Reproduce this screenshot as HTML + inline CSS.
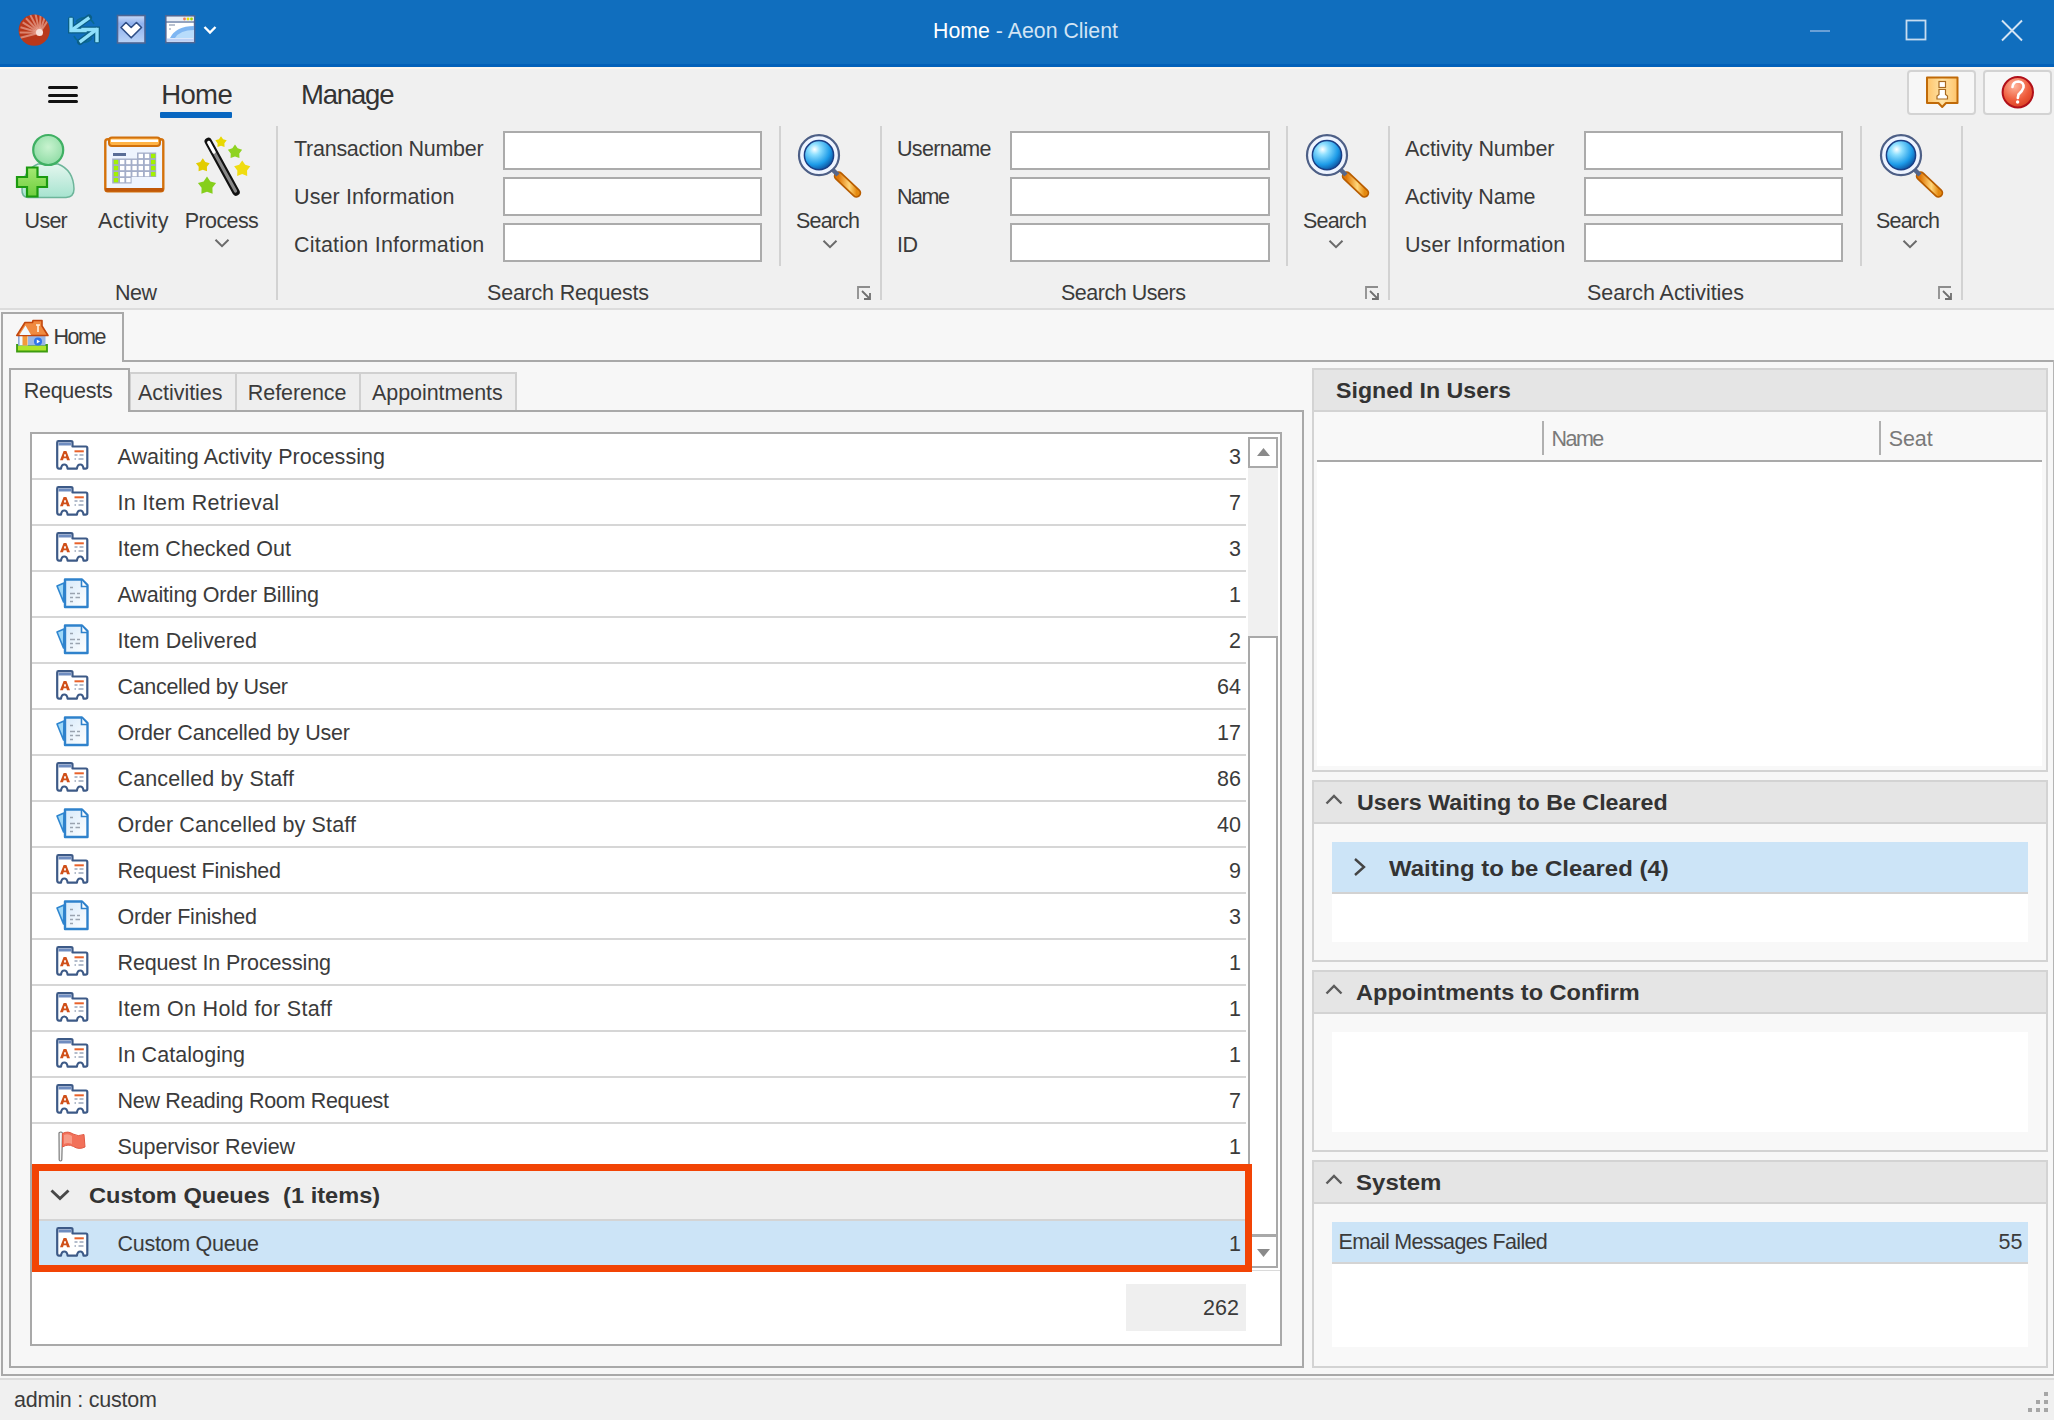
<!DOCTYPE html>
<html><head><meta charset="utf-8"><style>
html,body{margin:0;padding:0;}
body{width:2054px;height:1420px;overflow:hidden;position:relative;background:#f7f7f7;font-family:"Liberation Sans",sans-serif;}
.t{position:absolute;white-space:pre;}
svg{overflow:visible}
</style></head><body>
<div style="position:absolute;left:0px;top:0px;width:2054px;height:66px;background:#106ebe"></div>
<div style="position:absolute;left:0px;top:64px;width:2054px;height:3px;background:#0361b9"></div>
<div style="position:absolute;left:0px;top:67px;width:2054px;height:2px;background:#fbf6f0"></div>
<div style="position:absolute;left:0px;top:69px;width:2054px;height:240px;background:#f0f0f0"></div>
<div style="position:absolute;left:0px;top:308px;width:2054px;height:2px;background:#dcdcdc"></div>
<div style="position:absolute;left:48px;top:86px;width:30px;height:3px;background:#111;border-radius:1.5px"></div>
<div style="position:absolute;left:48px;top:93.5px;width:30px;height:3.0px;background:#111;border-radius:1.5px"></div>
<div style="position:absolute;left:48px;top:100px;width:30px;height:3px;background:#111;border-radius:1.5px"></div>
<div style="position:absolute;left:160px;top:112px;width:72px;height:6px;background:#0766c0;border-radius:1px"></div>
<div style="position:absolute;left:1907px;top:70px;width:69px;height:45px;background:#f7f7f7;border:2px solid #d3d3d3;border-radius:4px;box-sizing:border-box"></div>
<div style="position:absolute;left:1983px;top:70px;width:69px;height:45px;background:#f7f7f7;border:2px solid #d3d3d3;border-radius:4px;box-sizing:border-box"></div>
<div style="position:absolute;left:276px;top:126px;width:2px;height:174px;background:#d2d2d2"></div>
<div style="position:absolute;left:778.5px;top:126px;width:2.0px;height:140px;background:#d2d2d2"></div>
<div style="position:absolute;left:880px;top:126px;width:2px;height:174px;background:#d2d2d2"></div>
<div style="position:absolute;left:1286px;top:126px;width:2px;height:140px;background:#d2d2d2"></div>
<div style="position:absolute;left:1388px;top:126px;width:2px;height:174px;background:#d2d2d2"></div>
<div style="position:absolute;left:1860px;top:126px;width:2px;height:140px;background:#d2d2d2"></div>
<div style="position:absolute;left:1961px;top:126px;width:2px;height:174px;background:#d2d2d2"></div>
<div style="position:absolute;left:502.5px;top:131px;width:259.5px;height:38.5px;background:#fff;border:2px solid #ababab;box-sizing:border-box"></div>
<div style="position:absolute;left:502.5px;top:177px;width:259.5px;height:39px;background:#fff;border:2px solid #ababab;box-sizing:border-box"></div>
<div style="position:absolute;left:502.5px;top:223px;width:259.5px;height:39px;background:#fff;border:2px solid #ababab;box-sizing:border-box"></div>
<div style="position:absolute;left:1010px;top:131px;width:260px;height:38.5px;background:#fff;border:2px solid #ababab;box-sizing:border-box"></div>
<div style="position:absolute;left:1010px;top:177px;width:260px;height:39px;background:#fff;border:2px solid #ababab;box-sizing:border-box"></div>
<div style="position:absolute;left:1010px;top:223px;width:260px;height:39px;background:#fff;border:2px solid #ababab;box-sizing:border-box"></div>
<div style="position:absolute;left:1584px;top:131px;width:259px;height:38.5px;background:#fff;border:2px solid #ababab;box-sizing:border-box"></div>
<div style="position:absolute;left:1584px;top:177px;width:259px;height:39px;background:#fff;border:2px solid #ababab;box-sizing:border-box"></div>
<div style="position:absolute;left:1584px;top:223px;width:259px;height:39px;background:#fff;border:2px solid #ababab;box-sizing:border-box"></div>
<div style="position:absolute;left:1px;top:312px;width:123px;height:50px;background:#f7f7f7;border:2px solid #a9a9a9;border-bottom:none;box-sizing:border-box"></div>
<div style="position:absolute;left:123px;top:360px;width:1931px;height:2px;background:#a9a9a9"></div>
<div style="position:absolute;left:1px;top:360px;width:2px;height:1016px;background:#a9a9a9"></div>
<div style="position:absolute;left:1px;top:1374px;width:2053px;height:2px;background:#a9a9a9"></div>
<div style="position:absolute;left:2053px;top:360px;width:1px;height:1016px;background:#b4b4b4"></div>
<div style="position:absolute;left:129px;top:372px;width:108px;height:40px;background:#eeeeee;border:2px solid #d0d0d0;border-bottom:none;box-sizing:border-box"></div>
<div style="position:absolute;left:235px;top:372px;width:126px;height:40px;background:#eeeeee;border:2px solid #d0d0d0;border-bottom:none;box-sizing:border-box"></div>
<div style="position:absolute;left:359px;top:372px;width:158px;height:40px;background:#eeeeee;border:2px solid #d0d0d0;border-bottom:none;box-sizing:border-box"></div>
<div style="position:absolute;left:9px;top:410px;width:1294.5px;height:958px;background:#f7f7f7;border:2px solid #a9a9a9;box-sizing:border-box"></div>
<div style="position:absolute;left:9px;top:368px;width:121px;height:44px;background:#f7f7f7;border:2px solid #a9a9a9;border-bottom:none;box-sizing:border-box"></div>
<div style="position:absolute;left:30px;top:432px;width:1252px;height:913.5px;background:#fff;border:2px solid #a9a9a9;box-sizing:border-box"></div>
<div style="position:absolute;left:32px;top:478px;width:1214px;height:2px;background:#d6d6d6"></div>
<div style="position:absolute;left:32px;top:524px;width:1214px;height:2px;background:#d6d6d6"></div>
<div style="position:absolute;left:32px;top:570px;width:1214px;height:2px;background:#d6d6d6"></div>
<div style="position:absolute;left:32px;top:616px;width:1214px;height:2px;background:#d6d6d6"></div>
<div style="position:absolute;left:32px;top:662px;width:1214px;height:2px;background:#d6d6d6"></div>
<div style="position:absolute;left:32px;top:708px;width:1214px;height:2px;background:#d6d6d6"></div>
<div style="position:absolute;left:32px;top:754px;width:1214px;height:2px;background:#d6d6d6"></div>
<div style="position:absolute;left:32px;top:800px;width:1214px;height:2px;background:#d6d6d6"></div>
<div style="position:absolute;left:32px;top:846px;width:1214px;height:2px;background:#d6d6d6"></div>
<div style="position:absolute;left:32px;top:892px;width:1214px;height:2px;background:#d6d6d6"></div>
<div style="position:absolute;left:32px;top:938px;width:1214px;height:2px;background:#d6d6d6"></div>
<div style="position:absolute;left:32px;top:984px;width:1214px;height:2px;background:#d6d6d6"></div>
<div style="position:absolute;left:32px;top:1030px;width:1214px;height:2px;background:#d6d6d6"></div>
<div style="position:absolute;left:32px;top:1076px;width:1214px;height:2px;background:#d6d6d6"></div>
<div style="position:absolute;left:32px;top:1122px;width:1214px;height:2px;background:#d6d6d6"></div>
<div style="position:absolute;left:38px;top:1170px;width:1208px;height:51px;background:#efefef"></div>
<div style="position:absolute;left:38px;top:1219px;width:1208px;height:2px;background:#d4d4d4"></div>
<div style="position:absolute;left:38px;top:1221px;width:1208px;height:45px;background:#cce4f7"></div>
<svg style="position:absolute;left:48px;top:1186px" width="24" height="18" viewBox="0 0 24 18"><path d="M3.5 4.5 L12 12.5 L20.5 4.5" fill="none" stroke="#484848" stroke-width="2.9"/></svg>
<div style="position:absolute;left:1248px;top:467px;width:30px;height:170px;background:#f0f0f0"></div>
<div style="position:absolute;left:1248px;top:437px;width:30px;height:31px;background:#fff;border:2px solid #a9a9a9;box-sizing:border-box"></div>
<div style="position:absolute;left:1248px;top:636px;width:30px;height:600px;background:#fff;border:2px solid #a9a9a9;box-sizing:border-box"></div>
<div style="position:absolute;left:1248px;top:1235px;width:30px;height:33px;background:#fff;border:2px solid #a9a9a9;box-sizing:border-box"></div>
<svg style="position:absolute;left:1256.5px;top:448px" width="13" height="8" viewBox="0 0 13 8"><path d="M0 8 L6.5 0 L13 8 Z" fill="#8a8a8a"/></svg>
<svg style="position:absolute;left:1256.5px;top:1249px" width="13" height="8" viewBox="0 0 13 8"><path d="M0 0 L6.5 8 L13 0 Z" fill="#8a8a8a"/></svg>
<div style="position:absolute;left:1252px;top:1269.5px;width:28px;height:1.5px;background:#dadada"></div>
<div style="position:absolute;left:31.5px;top:1163.5px;width:1220.5px;height:108.5px;border:7px solid #f24405;box-sizing:border-box"></div>
<div style="position:absolute;left:1126px;top:1284px;width:120px;height:47px;background:#efefef"></div>
<div style="position:absolute;left:1312px;top:368px;width:735.5px;height:404px;background:#f8f8f8;border:2px solid #d3d3d3;box-sizing:border-box"></div>
<div style="position:absolute;left:1312px;top:368px;width:735.5px;height:43.5px;background:#e5e5e5;border:2px solid #d3d3d3;box-sizing:border-box"></div>
<div style="position:absolute;left:1317px;top:462px;width:725px;height:304px;background:#fff"></div>
<div style="position:absolute;left:1317px;top:460px;width:725px;height:2px;background:#a9a9a9"></div>
<div style="position:absolute;left:1542px;top:421px;width:2px;height:34px;background:#b0b0b0"></div>
<div style="position:absolute;left:1879px;top:421px;width:2px;height:34px;background:#b0b0b0"></div>
<div style="position:absolute;left:1312px;top:780px;width:735.5px;height:181.5px;background:#f8f8f8;border:2px solid #d3d3d3;box-sizing:border-box"></div>
<div style="position:absolute;left:1312px;top:780px;width:735.5px;height:43.5px;background:#e5e5e5;border:2px solid #d3d3d3;box-sizing:border-box"></div>
<svg style="position:absolute;left:1325px;top:793px" width="18" height="12" viewBox="0 0 18 12"><path d="M1.5 10.5 L9 3 L16.5 10.5" fill="none" stroke="#5c5c5c" stroke-width="2.4"/></svg>
<div style="position:absolute;left:1332px;top:841.5px;width:696px;height:100.10000000000002px;background:#fff"></div>
<div style="position:absolute;left:1332px;top:841.5px;width:696px;height:50.5px;background:#cce4f7"></div>
<div style="position:absolute;left:1332px;top:892px;width:696px;height:2px;background:#d2d2d2"></div>
<svg style="position:absolute;left:1352px;top:856.5px" width="16" height="20" viewBox="0 0 16 20"><path d="M3 2 L12 10 L3 18" fill="none" stroke="#444" stroke-width="2.4"/></svg>
<div style="position:absolute;left:1312px;top:970px;width:735.5px;height:181.5px;background:#f8f8f8;border:2px solid #d3d3d3;box-sizing:border-box"></div>
<div style="position:absolute;left:1312px;top:970px;width:735.5px;height:43.5px;background:#e5e5e5;border:2px solid #d3d3d3;box-sizing:border-box"></div>
<svg style="position:absolute;left:1325px;top:983px" width="18" height="12" viewBox="0 0 18 12"><path d="M1.5 10.5 L9 3 L16.5 10.5" fill="none" stroke="#5c5c5c" stroke-width="2.4"/></svg>
<div style="position:absolute;left:1332px;top:1031.5px;width:696px;height:100.09999999999991px;background:#fff"></div>
<div style="position:absolute;left:1312px;top:1160px;width:735.5px;height:208px;background:#f8f8f8;border:2px solid #d3d3d3;box-sizing:border-box"></div>
<div style="position:absolute;left:1312px;top:1160px;width:735.5px;height:43.5px;background:#e5e5e5;border:2px solid #d3d3d3;box-sizing:border-box"></div>
<svg style="position:absolute;left:1325px;top:1173px" width="18" height="12" viewBox="0 0 18 12"><path d="M1.5 10.5 L9 3 L16.5 10.5" fill="none" stroke="#5c5c5c" stroke-width="2.4"/></svg>
<div style="position:absolute;left:1332px;top:1221.5px;width:696px;height:125.5px;background:#fff"></div>
<div style="position:absolute;left:1332px;top:1221.5px;width:696px;height:40.5px;background:#cce4f7"></div>
<div style="position:absolute;left:1332px;top:1262px;width:696px;height:2px;background:#d4d4d4"></div>
<div style="position:absolute;left:0px;top:1376px;width:2054px;height:2px;background:#f7f7f7"></div>
<div style="position:absolute;left:0px;top:1378px;width:2054px;height:2px;background:#dcdcdc"></div>
<div style="position:absolute;left:0px;top:1380px;width:2054px;height:40px;background:#f0f0f0"></div>
<div style="position:absolute;left:2043.7px;top:1391.7px;width:4.0px;height:4.0px;background:#a6a6a6"></div>
<div style="position:absolute;left:2035.7px;top:1399.8px;width:4.0px;height:4.0px;background:#a6a6a6"></div>
<div style="position:absolute;left:2043.7px;top:1399.8px;width:4.0px;height:4.0px;background:#a6a6a6"></div>
<div style="position:absolute;left:2027.7px;top:1407.6px;width:4.0px;height:4.0px;background:#a6a6a6"></div>
<div style="position:absolute;left:2035.7px;top:1407.6px;width:4.0px;height:4.0px;background:#a6a6a6"></div>
<div style="position:absolute;left:2043.7px;top:1407.6px;width:4.0px;height:4.0px;background:#a6a6a6"></div>
<svg width="0" height="0" style="position:absolute"><defs>
<radialGradient id="gRed" cx="0.6" cy="0.6" r="0.6"><stop offset="0" stop-color="#f3d6cf"/><stop offset="0.35" stop-color="#cf5a3c"/><stop offset="1" stop-color="#b3341a"/></radialGradient>
<linearGradient id="gChk" x1="0" y1="0" x2="0" y2="1"><stop offset="0" stop-color="#c9dbf8"/><stop offset="0.3" stop-color="#8fb1ee"/><stop offset="1" stop-color="#b9d3f6"/></linearGradient>
<radialGradient id="gGlass" cx="0.35" cy="0.3" r="0.75"><stop offset="0" stop-color="#ffffff"/><stop offset="0.25" stop-color="#8fe0ff"/><stop offset="0.7" stop-color="#1d9be8"/><stop offset="1" stop-color="#0d4f9c"/></radialGradient>
<linearGradient id="gHandle" x1="0" y1="0" x2="1" y2="0"><stop offset="0" stop-color="#e07808"/><stop offset="0.6" stop-color="#ffd67a"/><stop offset="1" stop-color="#e58a10"/></linearGradient>
<radialGradient id="gHead" cx="0.5" cy="0.4" r="0.6"><stop offset="0" stop-color="#c8f3cf"/><stop offset="1" stop-color="#8fdca5"/></radialGradient>
<linearGradient id="gBody" x1="0" y1="0" x2="0" y2="1"><stop offset="0" stop-color="#e4f6ee"/><stop offset="1" stop-color="#a6e3cf"/></linearGradient>
<linearGradient id="gPlus" x1="0" y1="0" x2="0" y2="1"><stop offset="0" stop-color="#a4e873"/><stop offset="1" stop-color="#6fce3e"/></linearGradient>
<radialGradient id="gHelp" cx="0.4" cy="0.3" r="0.8"><stop offset="0" stop-color="#ffb49a"/><stop offset="0.6" stop-color="#ee5a3a"/><stop offset="1" stop-color="#d23a1e"/></radialGradient>
<linearGradient id="gInfo" x1="0" y1="0" x2="1" y2="0"><stop offset="0" stop-color="#ffc46a"/><stop offset="0.5" stop-color="#ffe3a6"/><stop offset="1" stop-color="#ffc46a"/></linearGradient>
<linearGradient id="gDoc" x1="0" y1="0" x2="1" y2="1"><stop offset="0" stop-color="#d7eafa"/><stop offset="1" stop-color="#ffffff"/></linearGradient>
</defs></svg>
<svg style="position:absolute;left:16px;top:12px" width="36" height="36" viewBox="16 12 36 36"><clipPath id="cAeon"><circle cx="34.2" cy="30.2" r="15.6"/></clipPath><circle cx="34.2" cy="30.2" r="15.6" fill="#b9381c"/><g clip-path="url(#cAeon)"><line x1="39.7" y1="32.8" x2="20.32834892003052" y2="37.77384503537425" stroke="#f2b8a8" stroke-width="2" opacity="0.6"/><line x1="39.7" y1="32.8" x2="19.702466512654286" y2="32.485906984339465" stroke="#f2b8a8" stroke-width="2" opacity="0.6"/><line x1="39.7" y1="32.8" x2="20.494110147392142" y2="27.220233430555147" stroke="#f2b8a8" stroke-width="2" opacity="0.6"/><line x1="39.7" y1="32.8" x2="22.64716413032488" y2="22.350081875826895" stroke="#f2b8a8" stroke-width="2" opacity="0.6"/><line x1="39.7" y1="32.8" x2="26.00900913503328" y2="18.220673227635036" stroke="#f2b8a8" stroke-width="2" opacity="0.6"/><line x1="39.7" y1="32.8" x2="30.341340630273997" y2="15.124720799901354" stroke="#f2b8a8" stroke-width="2" opacity="0.6"/><line x1="39.7" y1="32.8" x2="35.33706110717368" y2="13.281681316838188" stroke="#f2b8a8" stroke-width="2" opacity="0.6"/><line x1="39.7" y1="32.8" x2="40.642048699672756" y2="12.822198713385774" stroke="#f2b8a8" stroke-width="2" opacity="0.6"/><line x1="39.7" y1="32.8" x2="45.88025912859959" y2="13.77884343412942" stroke="#f2b8a8" stroke-width="2" opacity="0.6"/><line x1="39.7" y1="32.8" x2="50.680381616963814" y2="16.083803675900327" stroke="#f2b8a8" stroke-width="2" opacity="0.6"/><circle cx="39.5" cy="32.5" r="3.5" fill="#f7e0da"/></g></svg>
<svg style="position:absolute;left:66px;top:13px" width="36" height="33" viewBox="66 13 36 33"><g fill="none" stroke="#0a6a8c" stroke-width="1.6" opacity="0.9"><path d="M76 22 A10.5 10.5 0 0 1 94 24"/><path d="M92 38 A10.5 10.5 0 0 1 74 36"/></g><g fill="none" stroke="#0b5f86" stroke-width="6" stroke-linecap="round" stroke-linejoin="miter"><path d="M71 19.5 V30.5 H85"/><path d="M72 30 L89 17.5"/><path d="M97 40.5 V29.5 H83"/><path d="M96 30 L80 42"/></g><g fill="none" stroke="#8fe0fb" stroke-width="3.4" stroke-linecap="square" stroke-linejoin="miter"><path d="M71 19.5 V30.5 H85"/><path d="M72 30 L88 18.5"/><path d="M97 40.5 V29.5 H83"/><path d="M96 30 L81 41"/></g></svg>
<svg style="position:absolute;left:115px;top:13px" width="33" height="33" viewBox="115 13 33 33"><rect x="117.5" y="15.5" width="27.5" height="27.5" fill="url(#gChk)" stroke="#4e6694" stroke-width="1.6"/><path d="M121 27.5 L126 22.5 L131.2 27.5 L136.5 22.5 L141.5 27.5 L131.2 37.8 Z" fill="#fff" stroke="#2f4e86" stroke-width="1.6" stroke-linejoin="round"/></svg>
<svg style="position:absolute;left:163px;top:13px" width="35" height="33" viewBox="163 13 35 33"><rect x="165.8" y="15.8" width="28.8" height="26.8" fill="#fff" stroke="#4e6694" stroke-width="1.6"/><rect x="167" y="17" width="26.5" height="4" fill="#e6ecf5"/><circle cx="184.5" cy="19" r="1.4" fill="#f07b5a"/><circle cx="188" cy="19" r="1.4" fill="#e9e400"/><circle cx="191.5" cy="19" r="1.4" fill="#a7d400"/><line x1="166" y1="22" x2="195" y2="22" stroke="#4e6694" stroke-width="1.2"/><path d="M170 38 Q176 26 194 26 L194 38 Z" fill="#7fb6f2"/><path d="M175 38 Q180 30 194 30 L194 38 Z" fill="#b8dcfb"/><rect x="167" y="38.5" width="27" height="3.2" fill="#bcd0f5"/><line x1="169" y1="25" x2="175" y2="25" stroke="#8a98b0" stroke-width="1.2"/><line x1="169" y1="29" x2="171" y2="29" stroke="#8a98b0" stroke-width="1.2"/></svg>
<svg style="position:absolute;left:200px;top:22px" width="20" height="16" viewBox="200 22 20 16"><path d="M204.5 27 L210 32.5 L215.5 27" fill="none" stroke="#fff" stroke-width="2.4"/></svg>
<div style="position:absolute;left:1810px;top:30px;width:20px;height:2px;background:#6aa0d6"></div>
<svg style="position:absolute;left:1900px;top:14px" width="32" height="32" viewBox="1900 14 32 32"><rect x="1906.5" y="20.5" width="19" height="19" fill="none" stroke="#c7dcf0" stroke-width="1.8"/></svg>
<svg style="position:absolute;left:1996px;top:14px" width="32" height="32" viewBox="1996 14 32 32"><path d="M2002 20.5 L2022 40.5 M2022 20.5 L2002 40.5" stroke="#d2e3f3" stroke-width="1.9"/></svg>
<svg style="position:absolute;left:1920px;top:72px" width="46" height="40" viewBox="1920 72 46 40"><path d="M1927 77.5 H1957.5 V103 H1946 L1942.2 107 L1938.4 103 H1927 Z" fill="url(#gInfo)" stroke="#c06a08" stroke-width="2" stroke-linejoin="round"/><rect x="1939" y="81.5" width="6.5" height="6" fill="#fff" stroke="#a86a20" stroke-width="1.2"/><path d="M1939 89.5 H1945.5 V94.5 L1947.5 96 V99 H1937 V96 L1939 94.5 Z" fill="#fff" stroke="#a86a20" stroke-width="1.2"/></svg>
<svg style="position:absolute;left:1998px;top:70px" width="42" height="44" viewBox="1998 70 42 44"><circle cx="2017.8" cy="92.2" r="15.2" fill="url(#gHelp)" stroke="#b1101a" stroke-width="2"/><path d="M2012.5 87 Q2013 81.5 2018.5 81.5 Q2024 82 2023.5 87.5 Q2022.5 91 2018.5 94.5 L2017.8 98" fill="none" stroke="#fff" stroke-width="2.6" stroke-linecap="round"/><circle cx="2017.6" cy="102" r="1.7" fill="#fff"/></svg>
<svg style="position:absolute;left:12px;top:130px" width="68" height="72" viewBox="12 130 68 72"><path d="M28 197.5 Q21.5 197 22 189 Q23.5 170 38 164 L58 164 Q73.5 170 74 189 Q74 197 66 197.5 Z" fill="url(#gBody)" stroke="#6db59a" stroke-width="1.5"/><circle cx="48.2" cy="150" r="15" fill="url(#gHead)" stroke="#3fb063" stroke-width="2.2"/><path d="M27 167.5 H37.5 V177 H47 V187 H37.5 V196.5 H27 V187 H17 V177 H27 Z" fill="url(#gPlus)" stroke="#1c9a10" stroke-width="2.2" stroke-linejoin="miter"/></svg>
<svg style="position:absolute;left:100px;top:132px" width="70" height="64" viewBox="100 132 70 64"><rect x="105.3" y="139.2" width="58" height="52" rx="2.5" fill="#eef4fe" stroke="#d4720c" stroke-width="2.4"/><rect x="109" y="137.5" width="51" height="8.5" rx="3" fill="#ffb347" stroke="#d0700c" stroke-width="2"/><rect x="111" y="139.5" width="47" height="2.5" fill="#fff"/><path d="M112.2 158.5 H137 V152.5 H156.2 V177 H131.6 V183.5 H112.2 Z" fill="#a3adc8"/><rect x="138.6" y="153.8" width="4.4" height="4.3" fill="#ffffff"/><rect x="144.8" y="153.8" width="4.4" height="4.3" fill="#ffffff"/><rect x="151.0" y="153.8" width="4.4" height="4.3" fill="#a2f200"/><rect x="113.8" y="159.9" width="4.4" height="4.3" fill="#a2f200"/><rect x="120.0" y="159.9" width="4.4" height="4.3" fill="#ffffff"/><rect x="126.2" y="159.9" width="4.4" height="4.3" fill="#ffffff"/><rect x="132.4" y="159.9" width="4.4" height="4.3" fill="#ffffff"/><rect x="138.6" y="159.9" width="4.4" height="4.3" fill="#ffffff"/><rect x="144.8" y="159.9" width="4.4" height="4.3" fill="#ffffff"/><rect x="151.0" y="159.9" width="4.4" height="4.3" fill="#a2f200"/><rect x="113.8" y="165.9" width="4.4" height="4.3" fill="#a2f200"/><rect x="120.0" y="165.9" width="4.4" height="4.3" fill="#ffffff"/><rect x="126.2" y="165.9" width="4.4" height="4.3" fill="#ffffff"/><rect x="132.4" y="165.9" width="4.4" height="4.3" fill="#ffffff"/><rect x="138.6" y="165.9" width="4.4" height="4.3" fill="#ffffff"/><rect x="144.8" y="165.9" width="4.4" height="4.3" fill="#ffffff"/><rect x="151.0" y="165.9" width="4.4" height="4.3" fill="#a2f200"/><rect x="113.8" y="172.0" width="4.4" height="4.3" fill="#a2f200"/><rect x="120.0" y="172.0" width="4.4" height="4.3" fill="#ffffff"/><rect x="126.2" y="172.0" width="4.4" height="4.3" fill="#ffffff"/><rect x="132.4" y="172.0" width="4.4" height="4.3" fill="#ffffff"/><rect x="138.6" y="172.0" width="4.4" height="4.3" fill="#ffffff"/><rect x="144.8" y="172.0" width="4.4" height="4.3" fill="#ffffff"/><rect x="151.0" y="172.0" width="4.4" height="4.3" fill="#a2f200"/><rect x="113.8" y="178.0" width="4.4" height="4.3" fill="#a2f200"/><rect x="120.0" y="178.0" width="4.4" height="4.3" fill="#ffffff"/><rect x="126.2" y="178.0" width="4.4" height="4.3" fill="#ffffff"/><rect x="113" y="153" width="13" height="3" fill="#5a6d96"/><rect x="105.3" y="188" width="58" height="3.6" fill="#c0580a"/></svg>
<svg style="position:absolute;left:190px;top:132px" width="68" height="70" viewBox="190 132 68 70"><line x1="208.3" y1="141.5" x2="236" y2="192" stroke="#111" stroke-width="7.5" stroke-linecap="round"/><line x1="208.8" y1="142.5" x2="235.5" y2="191" stroke="#888" stroke-width="3.2" stroke-linecap="round"/><line x1="208.8" y1="142.5" x2="214" y2="152" stroke="#fff" stroke-width="3.2" stroke-linecap="round"/><polygon points="221.00,136.20 223.12,139.29 226.71,140.35 224.42,143.31 224.53,147.05 221.00,145.80 217.47,147.05 217.58,143.31 215.29,140.35 218.88,139.29" fill="#e8d800" stroke-linejoin="round"/><polygon points="235.00,144.50 237.65,148.36 242.13,149.68 239.28,153.39 239.41,158.07 235.00,156.50 230.59,158.07 230.72,153.39 227.87,149.68 232.35,148.36" fill="#8fd320" stroke-linejoin="round"/><polygon points="202.80,158.30 205.34,162.01 209.65,163.28 206.91,166.83 207.03,171.32 202.80,169.82 198.57,171.32 198.69,166.83 195.95,163.28 200.26,162.01" fill="#e2cc00" stroke-linejoin="round"/><polygon points="242.20,160.50 245.20,164.87 250.28,166.37 247.05,170.58 247.20,175.88 242.20,174.10 237.20,175.88 237.35,170.58 234.12,166.37 239.20,164.87" fill="#f0dc10" stroke-linejoin="round"/><polygon points="207.00,176.50 210.35,181.39 216.04,183.06 212.42,187.76 212.58,193.69 207.00,191.70 201.42,193.69 201.58,187.76 197.96,183.06 203.65,181.39" fill="#86cf1c" stroke-linejoin="round"/></svg>
<svg style="position:absolute;left:790px;top:128px" width="76" height="74" viewBox="790 128 76 74"><line x1="838.5" y1="176" x2="856.5" y2="193" stroke="#b85d00" stroke-width="9.5" stroke-linecap="round"/><line x1="838.5" y1="176" x2="856.5" y2="193" stroke="url(#gHandle)" stroke-width="6" stroke-linecap="round"/><line x1="831" y1="168" x2="838" y2="175" stroke="#55678c" stroke-width="4.5"/><circle cx="819" cy="155.2" r="20" fill="#eef4ff" stroke="#4d5f86" stroke-width="2.2"/><circle cx="819" cy="155.2" r="14.6" fill="url(#gGlass)" stroke="#1a3f86" stroke-width="1.5"/></svg>
<svg style="position:absolute;left:1297.5px;top:128px" width="76.0" height="74" viewBox="1297.5 128 76.0 74"><line x1="1346.0" y1="176" x2="1364.0" y2="193" stroke="#b85d00" stroke-width="9.5" stroke-linecap="round"/><line x1="1346.0" y1="176" x2="1364.0" y2="193" stroke="url(#gHandle)" stroke-width="6" stroke-linecap="round"/><line x1="1338.5" y1="168" x2="1345.5" y2="175" stroke="#55678c" stroke-width="4.5"/><circle cx="1326.5" cy="155.2" r="20" fill="#eef4ff" stroke="#4d5f86" stroke-width="2.2"/><circle cx="1326.5" cy="155.2" r="14.6" fill="url(#gGlass)" stroke="#1a3f86" stroke-width="1.5"/></svg>
<svg style="position:absolute;left:1872px;top:128px" width="76" height="74" viewBox="1872 128 76 74"><line x1="1920.5" y1="176" x2="1938.5" y2="193" stroke="#b85d00" stroke-width="9.5" stroke-linecap="round"/><line x1="1920.5" y1="176" x2="1938.5" y2="193" stroke="url(#gHandle)" stroke-width="6" stroke-linecap="round"/><line x1="1913" y1="168" x2="1920" y2="175" stroke="#55678c" stroke-width="4.5"/><circle cx="1901" cy="155.2" r="20" fill="#eef4ff" stroke="#4d5f86" stroke-width="2.2"/><circle cx="1901" cy="155.2" r="14.6" fill="url(#gGlass)" stroke="#1a3f86" stroke-width="1.5"/></svg>
<svg style="position:absolute;left:213.3px;top:237px" width="18.0" height="12" viewBox="213.3 237 18.0 12"><path d="M215.8 239.8 L222.3 246.2 L228.8 239.8" fill="none" stroke="#6a6a6a" stroke-width="2"/></svg>
<svg style="position:absolute;left:821px;top:237.6px" width="18" height="12.0" viewBox="821 237.6 18 12.0"><path d="M823.5 240.4 L830 246.79999999999998 L836.5 240.4" fill="none" stroke="#6a6a6a" stroke-width="2"/></svg>
<svg style="position:absolute;left:1327px;top:237.6px" width="18" height="12.0" viewBox="1327 237.6 18 12.0"><path d="M1329.5 240.4 L1336 246.79999999999998 L1342.5 240.4" fill="none" stroke="#6a6a6a" stroke-width="2"/></svg>
<svg style="position:absolute;left:1901px;top:237.6px" width="18" height="12.0" viewBox="1901 237.6 18 12.0"><path d="M1903.5 240.4 L1910 246.79999999999998 L1916.5 240.4" fill="none" stroke="#6a6a6a" stroke-width="2"/></svg>
<svg style="position:absolute;left:854.5px;top:284px" width="18.0" height="19" viewBox="854.5 284 18.0 19"><path d="M857.5 299 V287 H869.5" fill="none" stroke="#8d8d8d" stroke-width="1.8"/><path d="M861.5 291 L868.5 298 M869.5 293 V299 H863.5" fill="none" stroke="#6f6f6f" stroke-width="1.8"/></svg>
<svg style="position:absolute;left:1362.5px;top:284px" width="18.0" height="19" viewBox="1362.5 284 18.0 19"><path d="M1365.5 299 V287 H1377.5" fill="none" stroke="#8d8d8d" stroke-width="1.8"/><path d="M1369.5 291 L1376.5 298 M1377.5 293 V299 H1371.5" fill="none" stroke="#6f6f6f" stroke-width="1.8"/></svg>
<svg style="position:absolute;left:1935.5px;top:284px" width="18.0" height="19" viewBox="1935.5 284 18.0 19"><path d="M1938.5 299 V287 H1950.5" fill="none" stroke="#8d8d8d" stroke-width="1.8"/><path d="M1942.5 291 L1949.5 298 M1950.5 293 V299 H1944.5" fill="none" stroke="#6f6f6f" stroke-width="1.8"/></svg>
<svg style="position:absolute;left:14px;top:318px" width="36" height="36" viewBox="14 318 36 36"><path d="M17 345 H47 V351.5 H17 Z" fill="#aee52a" stroke="#3d9c10" stroke-width="1.8"/><rect x="18.5" y="335" width="9.5" height="10.5" fill="#eef8ff"/><rect x="18" y="335" width="1.6" height="10.5" fill="#8fa8d8"/><rect x="28" y="335" width="17.5" height="10.5" fill="#9ab6e4"/><rect x="22.5" y="336" width="5" height="9.5" fill="#f29a3a"/><circle cx="38" cy="341.5" r="4" fill="#2f74ea"/><path d="M36.8 339.5 L40 341.5 L36.8 343.5 Z" fill="#fff"/><path d="M16.8 335.5 L25 322.5 L32.5 322.5 L33 320.5 L42 320.5 L42 326 L48 335.5 Z" fill="#f08a40" stroke="#c2460c" stroke-width="1.6" stroke-linejoin="round"/><path d="M19.5 335 L25.5 325.5 L31 335 Z" fill="#f0faff"/><path d="M36 325 H40 M38 325 V332" stroke="#fff3e0" stroke-width="1.6"/></svg>
<svg style="position:absolute;left:54px;top:438px" width="38" height="38" viewBox="54 438 38 38"><path d="M57.2 466 V442.5 Q57.2 441.2 58.5 441.2 H71 Q72.5 441.2 72.5 442.5 V446.5 H86 Q87.3 446.5 87.3 448 V467 Q87.3 468.7 85.5 468.7 H83.5 Q83 464.5 80.2 464.5 Q77.4 464.5 76.9 468.7 H67.6 Q67.1 464.5 64.3 464.5 Q61.5 464.5 61 468.7 H59 Q57.2 468.7 57.2 466 Z" fill="#fff" stroke="#3d5a87" stroke-width="2.2" stroke-linejoin="round"/><rect x="58.5" y="442.5" width="12.8" height="3" fill="#6e8cc0"/><path d="M60 460.3 L63.6 451 H66.4 L70 460.3 H67 L66.4 458.3 H63.6 L63 460.3 Z" fill="#d0501a"/><rect x="64.1" y="454.3" width="1.8" height="2.2" fill="#fff"/><rect x="74.5" y="450.3" width="9.3" height="2" fill="#e8622a"/><path d="M74.5 455 H77.5 M79.5 455 H83.5 M74.5 459 H76 M78.5 459 H83.5" stroke="#9aa7ba" stroke-width="1.6"/></svg>
<svg style="position:absolute;left:54px;top:484px" width="38" height="38" viewBox="54 484 38 38"><path d="M57.2 512 V488.5 Q57.2 487.2 58.5 487.2 H71 Q72.5 487.2 72.5 488.5 V492.5 H86 Q87.3 492.5 87.3 494 V513 Q87.3 514.7 85.5 514.7 H83.5 Q83 510.5 80.2 510.5 Q77.4 510.5 76.9 514.7 H67.6 Q67.1 510.5 64.3 510.5 Q61.5 510.5 61 514.7 H59 Q57.2 514.7 57.2 512 Z" fill="#fff" stroke="#3d5a87" stroke-width="2.2" stroke-linejoin="round"/><rect x="58.5" y="488.5" width="12.8" height="3" fill="#6e8cc0"/><path d="M60 506.3 L63.6 497 H66.4 L70 506.3 H67 L66.4 504.3 H63.6 L63 506.3 Z" fill="#d0501a"/><rect x="64.1" y="500.3" width="1.8" height="2.2" fill="#fff"/><rect x="74.5" y="496.3" width="9.3" height="2" fill="#e8622a"/><path d="M74.5 501 H77.5 M79.5 501 H83.5 M74.5 505 H76 M78.5 505 H83.5" stroke="#9aa7ba" stroke-width="1.6"/></svg>
<svg style="position:absolute;left:54px;top:530px" width="38" height="38" viewBox="54 530 38 38"><path d="M57.2 558 V534.5 Q57.2 533.2 58.5 533.2 H71 Q72.5 533.2 72.5 534.5 V538.5 H86 Q87.3 538.5 87.3 540 V559 Q87.3 560.7 85.5 560.7 H83.5 Q83 556.5 80.2 556.5 Q77.4 556.5 76.9 560.7 H67.6 Q67.1 556.5 64.3 556.5 Q61.5 556.5 61 560.7 H59 Q57.2 560.7 57.2 558 Z" fill="#fff" stroke="#3d5a87" stroke-width="2.2" stroke-linejoin="round"/><rect x="58.5" y="534.5" width="12.8" height="3" fill="#6e8cc0"/><path d="M60 552.3 L63.6 543 H66.4 L70 552.3 H67 L66.4 550.3 H63.6 L63 552.3 Z" fill="#d0501a"/><rect x="64.1" y="546.3" width="1.8" height="2.2" fill="#fff"/><rect x="74.5" y="542.3" width="9.3" height="2" fill="#e8622a"/><path d="M74.5 547 H77.5 M79.5 547 H83.5 M74.5 551 H76 M78.5 551 H83.5" stroke="#9aa7ba" stroke-width="1.6"/></svg>
<svg style="position:absolute;left:54px;top:576px" width="38" height="38" viewBox="54 576 38 38"><path d="M64 583 L57 586 L63.5 602 Z" fill="#9fd8f8" stroke="#2f86d0" stroke-width="1.6" stroke-linejoin="round"/><path d="M65 579.5 H82 L87.5 585 V607 H65 Z" fill="url(#gDoc)" stroke="#2f82cc" stroke-width="2.4" stroke-linejoin="round"/><path d="M81.5 580 V586.5 H87" fill="#fff" stroke="#2f82cc" stroke-width="1.6"/><path d="M70 587.5 H73 M70 593.5 H75 M77 593.5 H80 M70 597.5 H73 M75.5 597.5 H80 M70 601.5 H73" stroke="#9aa4b0" stroke-width="1.6"/></svg>
<svg style="position:absolute;left:54px;top:622px" width="38" height="38" viewBox="54 622 38 38"><path d="M64 629 L57 632 L63.5 648 Z" fill="#9fd8f8" stroke="#2f86d0" stroke-width="1.6" stroke-linejoin="round"/><path d="M65 625.5 H82 L87.5 631 V653 H65 Z" fill="url(#gDoc)" stroke="#2f82cc" stroke-width="2.4" stroke-linejoin="round"/><path d="M81.5 626 V632.5 H87" fill="#fff" stroke="#2f82cc" stroke-width="1.6"/><path d="M70 633.5 H73 M70 639.5 H75 M77 639.5 H80 M70 643.5 H73 M75.5 643.5 H80 M70 647.5 H73" stroke="#9aa4b0" stroke-width="1.6"/></svg>
<svg style="position:absolute;left:54px;top:668px" width="38" height="38" viewBox="54 668 38 38"><path d="M57.2 696 V672.5 Q57.2 671.2 58.5 671.2 H71 Q72.5 671.2 72.5 672.5 V676.5 H86 Q87.3 676.5 87.3 678 V697 Q87.3 698.7 85.5 698.7 H83.5 Q83 694.5 80.2 694.5 Q77.4 694.5 76.9 698.7 H67.6 Q67.1 694.5 64.3 694.5 Q61.5 694.5 61 698.7 H59 Q57.2 698.7 57.2 696 Z" fill="#fff" stroke="#3d5a87" stroke-width="2.2" stroke-linejoin="round"/><rect x="58.5" y="672.5" width="12.8" height="3" fill="#6e8cc0"/><path d="M60 690.3 L63.6 681 H66.4 L70 690.3 H67 L66.4 688.3 H63.6 L63 690.3 Z" fill="#d0501a"/><rect x="64.1" y="684.3" width="1.8" height="2.2" fill="#fff"/><rect x="74.5" y="680.3" width="9.3" height="2" fill="#e8622a"/><path d="M74.5 685 H77.5 M79.5 685 H83.5 M74.5 689 H76 M78.5 689 H83.5" stroke="#9aa7ba" stroke-width="1.6"/></svg>
<svg style="position:absolute;left:54px;top:714px" width="38" height="38" viewBox="54 714 38 38"><path d="M64 721 L57 724 L63.5 740 Z" fill="#9fd8f8" stroke="#2f86d0" stroke-width="1.6" stroke-linejoin="round"/><path d="M65 717.5 H82 L87.5 723 V745 H65 Z" fill="url(#gDoc)" stroke="#2f82cc" stroke-width="2.4" stroke-linejoin="round"/><path d="M81.5 718 V724.5 H87" fill="#fff" stroke="#2f82cc" stroke-width="1.6"/><path d="M70 725.5 H73 M70 731.5 H75 M77 731.5 H80 M70 735.5 H73 M75.5 735.5 H80 M70 739.5 H73" stroke="#9aa4b0" stroke-width="1.6"/></svg>
<svg style="position:absolute;left:54px;top:760px" width="38" height="38" viewBox="54 760 38 38"><path d="M57.2 788 V764.5 Q57.2 763.2 58.5 763.2 H71 Q72.5 763.2 72.5 764.5 V768.5 H86 Q87.3 768.5 87.3 770 V789 Q87.3 790.7 85.5 790.7 H83.5 Q83 786.5 80.2 786.5 Q77.4 786.5 76.9 790.7 H67.6 Q67.1 786.5 64.3 786.5 Q61.5 786.5 61 790.7 H59 Q57.2 790.7 57.2 788 Z" fill="#fff" stroke="#3d5a87" stroke-width="2.2" stroke-linejoin="round"/><rect x="58.5" y="764.5" width="12.8" height="3" fill="#6e8cc0"/><path d="M60 782.3 L63.6 773 H66.4 L70 782.3 H67 L66.4 780.3 H63.6 L63 782.3 Z" fill="#d0501a"/><rect x="64.1" y="776.3" width="1.8" height="2.2" fill="#fff"/><rect x="74.5" y="772.3" width="9.3" height="2" fill="#e8622a"/><path d="M74.5 777 H77.5 M79.5 777 H83.5 M74.5 781 H76 M78.5 781 H83.5" stroke="#9aa7ba" stroke-width="1.6"/></svg>
<svg style="position:absolute;left:54px;top:806px" width="38" height="38" viewBox="54 806 38 38"><path d="M64 813 L57 816 L63.5 832 Z" fill="#9fd8f8" stroke="#2f86d0" stroke-width="1.6" stroke-linejoin="round"/><path d="M65 809.5 H82 L87.5 815 V837 H65 Z" fill="url(#gDoc)" stroke="#2f82cc" stroke-width="2.4" stroke-linejoin="round"/><path d="M81.5 810 V816.5 H87" fill="#fff" stroke="#2f82cc" stroke-width="1.6"/><path d="M70 817.5 H73 M70 823.5 H75 M77 823.5 H80 M70 827.5 H73 M75.5 827.5 H80 M70 831.5 H73" stroke="#9aa4b0" stroke-width="1.6"/></svg>
<svg style="position:absolute;left:54px;top:852px" width="38" height="38" viewBox="54 852 38 38"><path d="M57.2 880 V856.5 Q57.2 855.2 58.5 855.2 H71 Q72.5 855.2 72.5 856.5 V860.5 H86 Q87.3 860.5 87.3 862 V881 Q87.3 882.7 85.5 882.7 H83.5 Q83 878.5 80.2 878.5 Q77.4 878.5 76.9 882.7 H67.6 Q67.1 878.5 64.3 878.5 Q61.5 878.5 61 882.7 H59 Q57.2 882.7 57.2 880 Z" fill="#fff" stroke="#3d5a87" stroke-width="2.2" stroke-linejoin="round"/><rect x="58.5" y="856.5" width="12.8" height="3" fill="#6e8cc0"/><path d="M60 874.3 L63.6 865 H66.4 L70 874.3 H67 L66.4 872.3 H63.6 L63 874.3 Z" fill="#d0501a"/><rect x="64.1" y="868.3" width="1.8" height="2.2" fill="#fff"/><rect x="74.5" y="864.3" width="9.3" height="2" fill="#e8622a"/><path d="M74.5 869 H77.5 M79.5 869 H83.5 M74.5 873 H76 M78.5 873 H83.5" stroke="#9aa7ba" stroke-width="1.6"/></svg>
<svg style="position:absolute;left:54px;top:898px" width="38" height="38" viewBox="54 898 38 38"><path d="M64 905 L57 908 L63.5 924 Z" fill="#9fd8f8" stroke="#2f86d0" stroke-width="1.6" stroke-linejoin="round"/><path d="M65 901.5 H82 L87.5 907 V929 H65 Z" fill="url(#gDoc)" stroke="#2f82cc" stroke-width="2.4" stroke-linejoin="round"/><path d="M81.5 902 V908.5 H87" fill="#fff" stroke="#2f82cc" stroke-width="1.6"/><path d="M70 909.5 H73 M70 915.5 H75 M77 915.5 H80 M70 919.5 H73 M75.5 919.5 H80 M70 923.5 H73" stroke="#9aa4b0" stroke-width="1.6"/></svg>
<svg style="position:absolute;left:54px;top:944px" width="38" height="38" viewBox="54 944 38 38"><path d="M57.2 972 V948.5 Q57.2 947.2 58.5 947.2 H71 Q72.5 947.2 72.5 948.5 V952.5 H86 Q87.3 952.5 87.3 954 V973 Q87.3 974.7 85.5 974.7 H83.5 Q83 970.5 80.2 970.5 Q77.4 970.5 76.9 974.7 H67.6 Q67.1 970.5 64.3 970.5 Q61.5 970.5 61 974.7 H59 Q57.2 974.7 57.2 972 Z" fill="#fff" stroke="#3d5a87" stroke-width="2.2" stroke-linejoin="round"/><rect x="58.5" y="948.5" width="12.8" height="3" fill="#6e8cc0"/><path d="M60 966.3 L63.6 957 H66.4 L70 966.3 H67 L66.4 964.3 H63.6 L63 966.3 Z" fill="#d0501a"/><rect x="64.1" y="960.3" width="1.8" height="2.2" fill="#fff"/><rect x="74.5" y="956.3" width="9.3" height="2" fill="#e8622a"/><path d="M74.5 961 H77.5 M79.5 961 H83.5 M74.5 965 H76 M78.5 965 H83.5" stroke="#9aa7ba" stroke-width="1.6"/></svg>
<svg style="position:absolute;left:54px;top:990px" width="38" height="38" viewBox="54 990 38 38"><path d="M57.2 1018 V994.5 Q57.2 993.2 58.5 993.2 H71 Q72.5 993.2 72.5 994.5 V998.5 H86 Q87.3 998.5 87.3 1000 V1019 Q87.3 1020.7 85.5 1020.7 H83.5 Q83 1016.5 80.2 1016.5 Q77.4 1016.5 76.9 1020.7 H67.6 Q67.1 1016.5 64.3 1016.5 Q61.5 1016.5 61 1020.7 H59 Q57.2 1020.7 57.2 1018 Z" fill="#fff" stroke="#3d5a87" stroke-width="2.2" stroke-linejoin="round"/><rect x="58.5" y="994.5" width="12.8" height="3" fill="#6e8cc0"/><path d="M60 1012.3 L63.6 1003 H66.4 L70 1012.3 H67 L66.4 1010.3 H63.6 L63 1012.3 Z" fill="#d0501a"/><rect x="64.1" y="1006.3" width="1.8" height="2.2" fill="#fff"/><rect x="74.5" y="1002.3" width="9.3" height="2" fill="#e8622a"/><path d="M74.5 1007 H77.5 M79.5 1007 H83.5 M74.5 1011 H76 M78.5 1011 H83.5" stroke="#9aa7ba" stroke-width="1.6"/></svg>
<svg style="position:absolute;left:54px;top:1036px" width="38" height="38" viewBox="54 1036 38 38"><path d="M57.2 1064 V1040.5 Q57.2 1039.2 58.5 1039.2 H71 Q72.5 1039.2 72.5 1040.5 V1044.5 H86 Q87.3 1044.5 87.3 1046 V1065 Q87.3 1066.7 85.5 1066.7 H83.5 Q83 1062.5 80.2 1062.5 Q77.4 1062.5 76.9 1066.7 H67.6 Q67.1 1062.5 64.3 1062.5 Q61.5 1062.5 61 1066.7 H59 Q57.2 1066.7 57.2 1064 Z" fill="#fff" stroke="#3d5a87" stroke-width="2.2" stroke-linejoin="round"/><rect x="58.5" y="1040.5" width="12.8" height="3" fill="#6e8cc0"/><path d="M60 1058.3 L63.6 1049 H66.4 L70 1058.3 H67 L66.4 1056.3 H63.6 L63 1058.3 Z" fill="#d0501a"/><rect x="64.1" y="1052.3" width="1.8" height="2.2" fill="#fff"/><rect x="74.5" y="1048.3" width="9.3" height="2" fill="#e8622a"/><path d="M74.5 1053 H77.5 M79.5 1053 H83.5 M74.5 1057 H76 M78.5 1057 H83.5" stroke="#9aa7ba" stroke-width="1.6"/></svg>
<svg style="position:absolute;left:54px;top:1082px" width="38" height="38" viewBox="54 1082 38 38"><path d="M57.2 1110 V1086.5 Q57.2 1085.2 58.5 1085.2 H71 Q72.5 1085.2 72.5 1086.5 V1090.5 H86 Q87.3 1090.5 87.3 1092 V1111 Q87.3 1112.7 85.5 1112.7 H83.5 Q83 1108.5 80.2 1108.5 Q77.4 1108.5 76.9 1112.7 H67.6 Q67.1 1108.5 64.3 1108.5 Q61.5 1108.5 61 1112.7 H59 Q57.2 1112.7 57.2 1110 Z" fill="#fff" stroke="#3d5a87" stroke-width="2.2" stroke-linejoin="round"/><rect x="58.5" y="1086.5" width="12.8" height="3" fill="#6e8cc0"/><path d="M60 1104.3 L63.6 1095 H66.4 L70 1104.3 H67 L66.4 1102.3 H63.6 L63 1104.3 Z" fill="#d0501a"/><rect x="64.1" y="1098.3" width="1.8" height="2.2" fill="#fff"/><rect x="74.5" y="1094.3" width="9.3" height="2" fill="#e8622a"/><path d="M74.5 1099 H77.5 M79.5 1099 H83.5 M74.5 1103 H76 M78.5 1103 H83.5" stroke="#9aa7ba" stroke-width="1.6"/></svg>
<svg style="position:absolute;left:54px;top:1128px" width="38" height="38" viewBox="54 1128 38 38"><path d="M59 1133 Q61 1131 62.5 1133 L61.8 1160 Q60.5 1162 59.2 1160 Z" fill="#f4f4f4" stroke="#7a7a7a" stroke-width="1.2"/><path d="M62.5 1133.5 Q68 1130.5 73 1134 Q78 1137 84 1134.5 L85 1147 Q79 1150 73.5 1146.5 Q68 1143.5 62.5 1147 Z" fill="#f2715a" stroke="#e05a44" stroke-width="1"/><path d="M64 1135 Q68 1133 72 1136 L72 1144 Q68 1142 64 1144 Z" fill="#f79a86"/></svg>
<svg style="position:absolute;left:54px;top:1225px" width="38" height="38" viewBox="54 1225 38 38"><path d="M57.2 1253 V1229.5 Q57.2 1228.2 58.5 1228.2 H71 Q72.5 1228.2 72.5 1229.5 V1233.5 H86 Q87.3 1233.5 87.3 1235 V1254 Q87.3 1255.7 85.5 1255.7 H83.5 Q83 1251.5 80.2 1251.5 Q77.4 1251.5 76.9 1255.7 H67.6 Q67.1 1251.5 64.3 1251.5 Q61.5 1251.5 61 1255.7 H59 Q57.2 1255.7 57.2 1253 Z" fill="#fff" stroke="#3d5a87" stroke-width="2.2" stroke-linejoin="round"/><rect x="58.5" y="1229.5" width="12.8" height="3" fill="#6e8cc0"/><path d="M60 1247.3 L63.6 1238 H66.4 L70 1247.3 H67 L66.4 1245.3 H63.6 L63 1247.3 Z" fill="#d0501a"/><rect x="64.1" y="1241.3" width="1.8" height="2.2" fill="#fff"/><rect x="74.5" y="1237.3" width="9.3" height="2" fill="#e8622a"/><path d="M74.5 1242 H77.5 M79.5 1242 H83.5 M74.5 1246 H76 M78.5 1246 H83.5" stroke="#9aa7ba" stroke-width="1.6"/></svg>
<div class="t" style="left:933.00px;top:20.97px;font-size:21.3px;line-height:21.3px;color:#d2e4f4;letter-spacing:0.019px;"><span style="color:#fff">Home</span> - Aeon Client</div>
<div class="t" style="left:161.20px;top:81.02px;font-size:27.5px;line-height:27.5px;color:#333;letter-spacing:-0.620px;">Home</div>
<div class="t" style="left:301.00px;top:81.02px;font-size:27.5px;line-height:27.5px;color:#333;letter-spacing:-1.178px;">Manage</div>
<div class="t" style="left:24.60px;top:210.80px;font-size:21.5px;line-height:21.5px;color:#3b3b3b;letter-spacing:-0.735px;">User</div>
<div class="t" style="left:98.00px;top:210.80px;font-size:21.5px;line-height:21.5px;color:#3b3b3b;letter-spacing:0.329px;">Activity</div>
<div class="t" style="left:184.80px;top:210.80px;font-size:21.5px;line-height:21.5px;color:#3b3b3b;letter-spacing:-0.612px;">Process</div>
<div class="t" style="left:115.00px;top:282.80px;font-size:21.5px;line-height:21.5px;color:#3b3b3b;letter-spacing:-0.508px;">New</div>
<div class="t" style="left:294.00px;top:138.80px;font-size:21.5px;line-height:21.5px;color:#3b3b3b;letter-spacing:-0.258px;">Transaction Number</div>
<div class="t" style="left:294.00px;top:186.80px;font-size:21.5px;line-height:21.5px;color:#3b3b3b;letter-spacing:0.105px;">User Information</div>
<div class="t" style="left:294.00px;top:234.80px;font-size:21.5px;line-height:21.5px;color:#3b3b3b;letter-spacing:0.203px;">Citation Information</div>
<div class="t" style="left:796.00px;top:210.80px;font-size:21.5px;line-height:21.5px;color:#3b3b3b;letter-spacing:-0.825px;">Search</div>
<div class="t" style="left:487.00px;top:282.80px;font-size:21.5px;line-height:21.5px;color:#3b3b3b;letter-spacing:-0.210px;">Search Requests</div>
<div class="t" style="left:897.00px;top:138.80px;font-size:21.5px;line-height:21.5px;color:#3b3b3b;letter-spacing:-0.684px;">Username</div>
<div class="t" style="left:897.00px;top:186.80px;font-size:21.5px;line-height:21.5px;color:#3b3b3b;letter-spacing:-1.453px;">Name</div>
<div class="t" style="left:897.00px;top:234.80px;font-size:21.5px;line-height:21.5px;color:#3b3b3b;letter-spacing:-0.500px;">ID</div>
<div class="t" style="left:1303.00px;top:210.80px;font-size:21.5px;line-height:21.5px;color:#3b3b3b;letter-spacing:-0.825px;">Search</div>
<div class="t" style="left:1061.00px;top:282.80px;font-size:21.5px;line-height:21.5px;color:#3b3b3b;letter-spacing:-0.477px;">Search Users</div>
<div class="t" style="left:1405.00px;top:138.80px;font-size:21.5px;line-height:21.5px;color:#3b3b3b;letter-spacing:-0.075px;">Activity Number</div>
<div class="t" style="left:1405.00px;top:186.80px;font-size:21.5px;line-height:21.5px;color:#3b3b3b;letter-spacing:-0.077px;">Activity Name</div>
<div class="t" style="left:1405.00px;top:234.80px;font-size:21.5px;line-height:21.5px;color:#3b3b3b;letter-spacing:0.085px;">User Information</div>
<div class="t" style="left:1876.00px;top:210.80px;font-size:21.5px;line-height:21.5px;color:#3b3b3b;letter-spacing:-0.825px;">Search</div>
<div class="t" style="left:1587.00px;top:282.80px;font-size:21.5px;line-height:21.5px;color:#3b3b3b;letter-spacing:-0.046px;">Search Activities</div>
<div class="t" style="left:53.50px;top:326.80px;font-size:21.5px;line-height:21.5px;color:#3b3b3b;letter-spacing:-1.453px;">Home</div>
<div class="t" style="left:23.70px;top:381.40px;font-size:21.5px;line-height:21.5px;color:#3b3b3b;letter-spacing:-0.263px;">Requests</div>
<div class="t" style="left:138.00px;top:383.40px;font-size:21.5px;line-height:21.5px;color:#3b3b3b;letter-spacing:-0.036px;">Activities</div>
<div class="t" style="left:247.80px;top:383.40px;font-size:21.5px;line-height:21.5px;color:#3b3b3b;letter-spacing:-0.075px;">Reference</div>
<div class="t" style="left:372.00px;top:383.40px;font-size:21.5px;line-height:21.5px;color:#3b3b3b;letter-spacing:-0.070px;">Appointments</div>
<div class="t" style="left:117.50px;top:446.80px;font-size:21.5px;line-height:21.5px;color:#3b3b3b;letter-spacing:0.052px;">Awaiting Activity Processing</div>
<div class="t" style="left:1229.03px;top:446.80px;font-size:21.5px;line-height:21.5px;color:#3b3b3b;">3</div>
<div class="t" style="left:117.50px;top:492.80px;font-size:21.5px;line-height:21.5px;color:#3b3b3b;letter-spacing:0.311px;">In Item Retrieval</div>
<div class="t" style="left:1229.03px;top:492.80px;font-size:21.5px;line-height:21.5px;color:#3b3b3b;">7</div>
<div class="t" style="left:117.50px;top:538.80px;font-size:21.5px;line-height:21.5px;color:#3b3b3b;letter-spacing:0.015px;">Item Checked Out</div>
<div class="t" style="left:1229.03px;top:538.80px;font-size:21.5px;line-height:21.5px;color:#3b3b3b;">3</div>
<div class="t" style="left:117.50px;top:584.80px;font-size:21.5px;line-height:21.5px;color:#3b3b3b;letter-spacing:-0.174px;">Awaiting Order Billing</div>
<div class="t" style="left:1229.03px;top:584.80px;font-size:21.5px;line-height:21.5px;color:#3b3b3b;">1</div>
<div class="t" style="left:117.50px;top:630.80px;font-size:21.5px;line-height:21.5px;color:#3b3b3b;letter-spacing:0.069px;">Item Delivered</div>
<div class="t" style="left:1229.03px;top:630.80px;font-size:21.5px;line-height:21.5px;color:#3b3b3b;">2</div>
<div class="t" style="left:117.50px;top:676.80px;font-size:21.5px;line-height:21.5px;color:#3b3b3b;letter-spacing:-0.323px;">Cancelled by User</div>
<div class="t" style="left:1217.08px;top:676.80px;font-size:21.5px;line-height:21.5px;color:#3b3b3b;">64</div>
<div class="t" style="left:117.50px;top:722.80px;font-size:21.5px;line-height:21.5px;color:#3b3b3b;letter-spacing:-0.187px;">Order Cancelled by User</div>
<div class="t" style="left:1217.08px;top:722.80px;font-size:21.5px;line-height:21.5px;color:#3b3b3b;">17</div>
<div class="t" style="left:117.50px;top:768.80px;font-size:21.5px;line-height:21.5px;color:#3b3b3b;letter-spacing:0.141px;">Cancelled by Staff</div>
<div class="t" style="left:1217.08px;top:768.80px;font-size:21.5px;line-height:21.5px;color:#3b3b3b;">86</div>
<div class="t" style="left:117.50px;top:814.80px;font-size:21.5px;line-height:21.5px;color:#3b3b3b;letter-spacing:0.151px;">Order Cancelled by Staff</div>
<div class="t" style="left:1217.08px;top:814.80px;font-size:21.5px;line-height:21.5px;color:#3b3b3b;">40</div>
<div class="t" style="left:117.50px;top:860.80px;font-size:21.5px;line-height:21.5px;color:#3b3b3b;letter-spacing:-0.255px;">Request Finished</div>
<div class="t" style="left:1229.03px;top:860.80px;font-size:21.5px;line-height:21.5px;color:#3b3b3b;">9</div>
<div class="t" style="left:117.50px;top:906.80px;font-size:21.5px;line-height:21.5px;color:#3b3b3b;letter-spacing:-0.208px;">Order Finished</div>
<div class="t" style="left:1229.03px;top:906.80px;font-size:21.5px;line-height:21.5px;color:#3b3b3b;">3</div>
<div class="t" style="left:117.50px;top:952.80px;font-size:21.5px;line-height:21.5px;color:#3b3b3b;letter-spacing:-0.141px;">Request In Processing</div>
<div class="t" style="left:1229.03px;top:952.80px;font-size:21.5px;line-height:21.5px;color:#3b3b3b;">1</div>
<div class="t" style="left:117.50px;top:998.80px;font-size:21.5px;line-height:21.5px;color:#3b3b3b;letter-spacing:0.332px;">Item On Hold for Staff</div>
<div class="t" style="left:1229.03px;top:998.80px;font-size:21.5px;line-height:21.5px;color:#3b3b3b;">1</div>
<div class="t" style="left:117.50px;top:1044.80px;font-size:21.5px;line-height:21.5px;color:#3b3b3b;letter-spacing:0.066px;">In Cataloging</div>
<div class="t" style="left:1229.03px;top:1044.80px;font-size:21.5px;line-height:21.5px;color:#3b3b3b;">1</div>
<div class="t" style="left:117.50px;top:1090.80px;font-size:21.5px;line-height:21.5px;color:#3b3b3b;letter-spacing:-0.302px;">New Reading Room Request</div>
<div class="t" style="left:1229.03px;top:1090.80px;font-size:21.5px;line-height:21.5px;color:#3b3b3b;">7</div>
<div class="t" style="left:117.50px;top:1136.80px;font-size:21.5px;line-height:21.5px;color:#3b3b3b;letter-spacing:-0.108px;">Supervisor Review</div>
<div class="t" style="left:1229.03px;top:1136.80px;font-size:21.5px;line-height:21.5px;color:#3b3b3b;">1</div>
<div class="t" style="left:88.80px;top:1186.20px;font-size:21.5px;line-height:21.5px;color:#333;font-weight:700;transform:scaleX(1.0979);transform-origin:0 0;">Custom Queues  (1 items)</div>
<div class="t" style="left:117.50px;top:1234.10px;font-size:21.5px;line-height:21.5px;color:#3b3b3b;letter-spacing:-0.283px;">Custom Queue</div>
<div class="t" style="left:1229.03px;top:1234.10px;font-size:21.5px;line-height:21.5px;color:#3b3b3b;">1</div>
<div class="t" style="left:1203.12px;top:1298.00px;font-size:21.5px;line-height:21.5px;color:#3b3b3b;">262</div>
<div class="t" style="left:1336.00px;top:380.80px;font-size:21.5px;line-height:21.5px;color:#333;font-weight:700;transform:scaleX(1.0769);transform-origin:0 0;">Signed In Users</div>
<div class="t" style="left:1551.50px;top:429.40px;font-size:21.5px;line-height:21.5px;color:#7a7a7a;letter-spacing:-1.520px;">Name</div>
<div class="t" style="left:1888.80px;top:429.40px;font-size:21.5px;line-height:21.5px;color:#7a7a7a;letter-spacing:-0.111px;">Seat</div>
<div class="t" style="left:1357.00px;top:792.70px;font-size:21.5px;line-height:21.5px;color:#333;font-weight:700;transform:scaleX(1.0820);transform-origin:0 0;">Users Waiting to Be Cleared</div>
<div class="t" style="left:1388.80px;top:859.30px;font-size:21.5px;line-height:21.5px;color:#333;font-weight:700;transform:scaleX(1.1132);transform-origin:0 0;">Waiting to be Cleared (4)</div>
<div class="t" style="left:1355.80px;top:982.50px;font-size:21.5px;line-height:21.5px;color:#333;font-weight:700;transform:scaleX(1.0950);transform-origin:0 0;">Appointments to Confirm</div>
<div class="t" style="left:1355.80px;top:1172.50px;font-size:21.5px;line-height:21.5px;color:#333;font-weight:700;transform:scaleX(1.1176);transform-origin:0 0;">System</div>
<div class="t" style="left:1338.50px;top:1232.00px;font-size:21.5px;line-height:21.5px;color:#3b3b3b;letter-spacing:-0.648px;">Email Messages Failed</div>
<div class="t" style="left:1998.58px;top:1232.00px;font-size:21.5px;line-height:21.5px;color:#3b3b3b;">55</div>
<div class="t" style="left:14.00px;top:1389.80px;font-size:21.5px;line-height:21.5px;color:#3b3b3b;letter-spacing:-0.214px;">admin : custom</div>
</body></html>
